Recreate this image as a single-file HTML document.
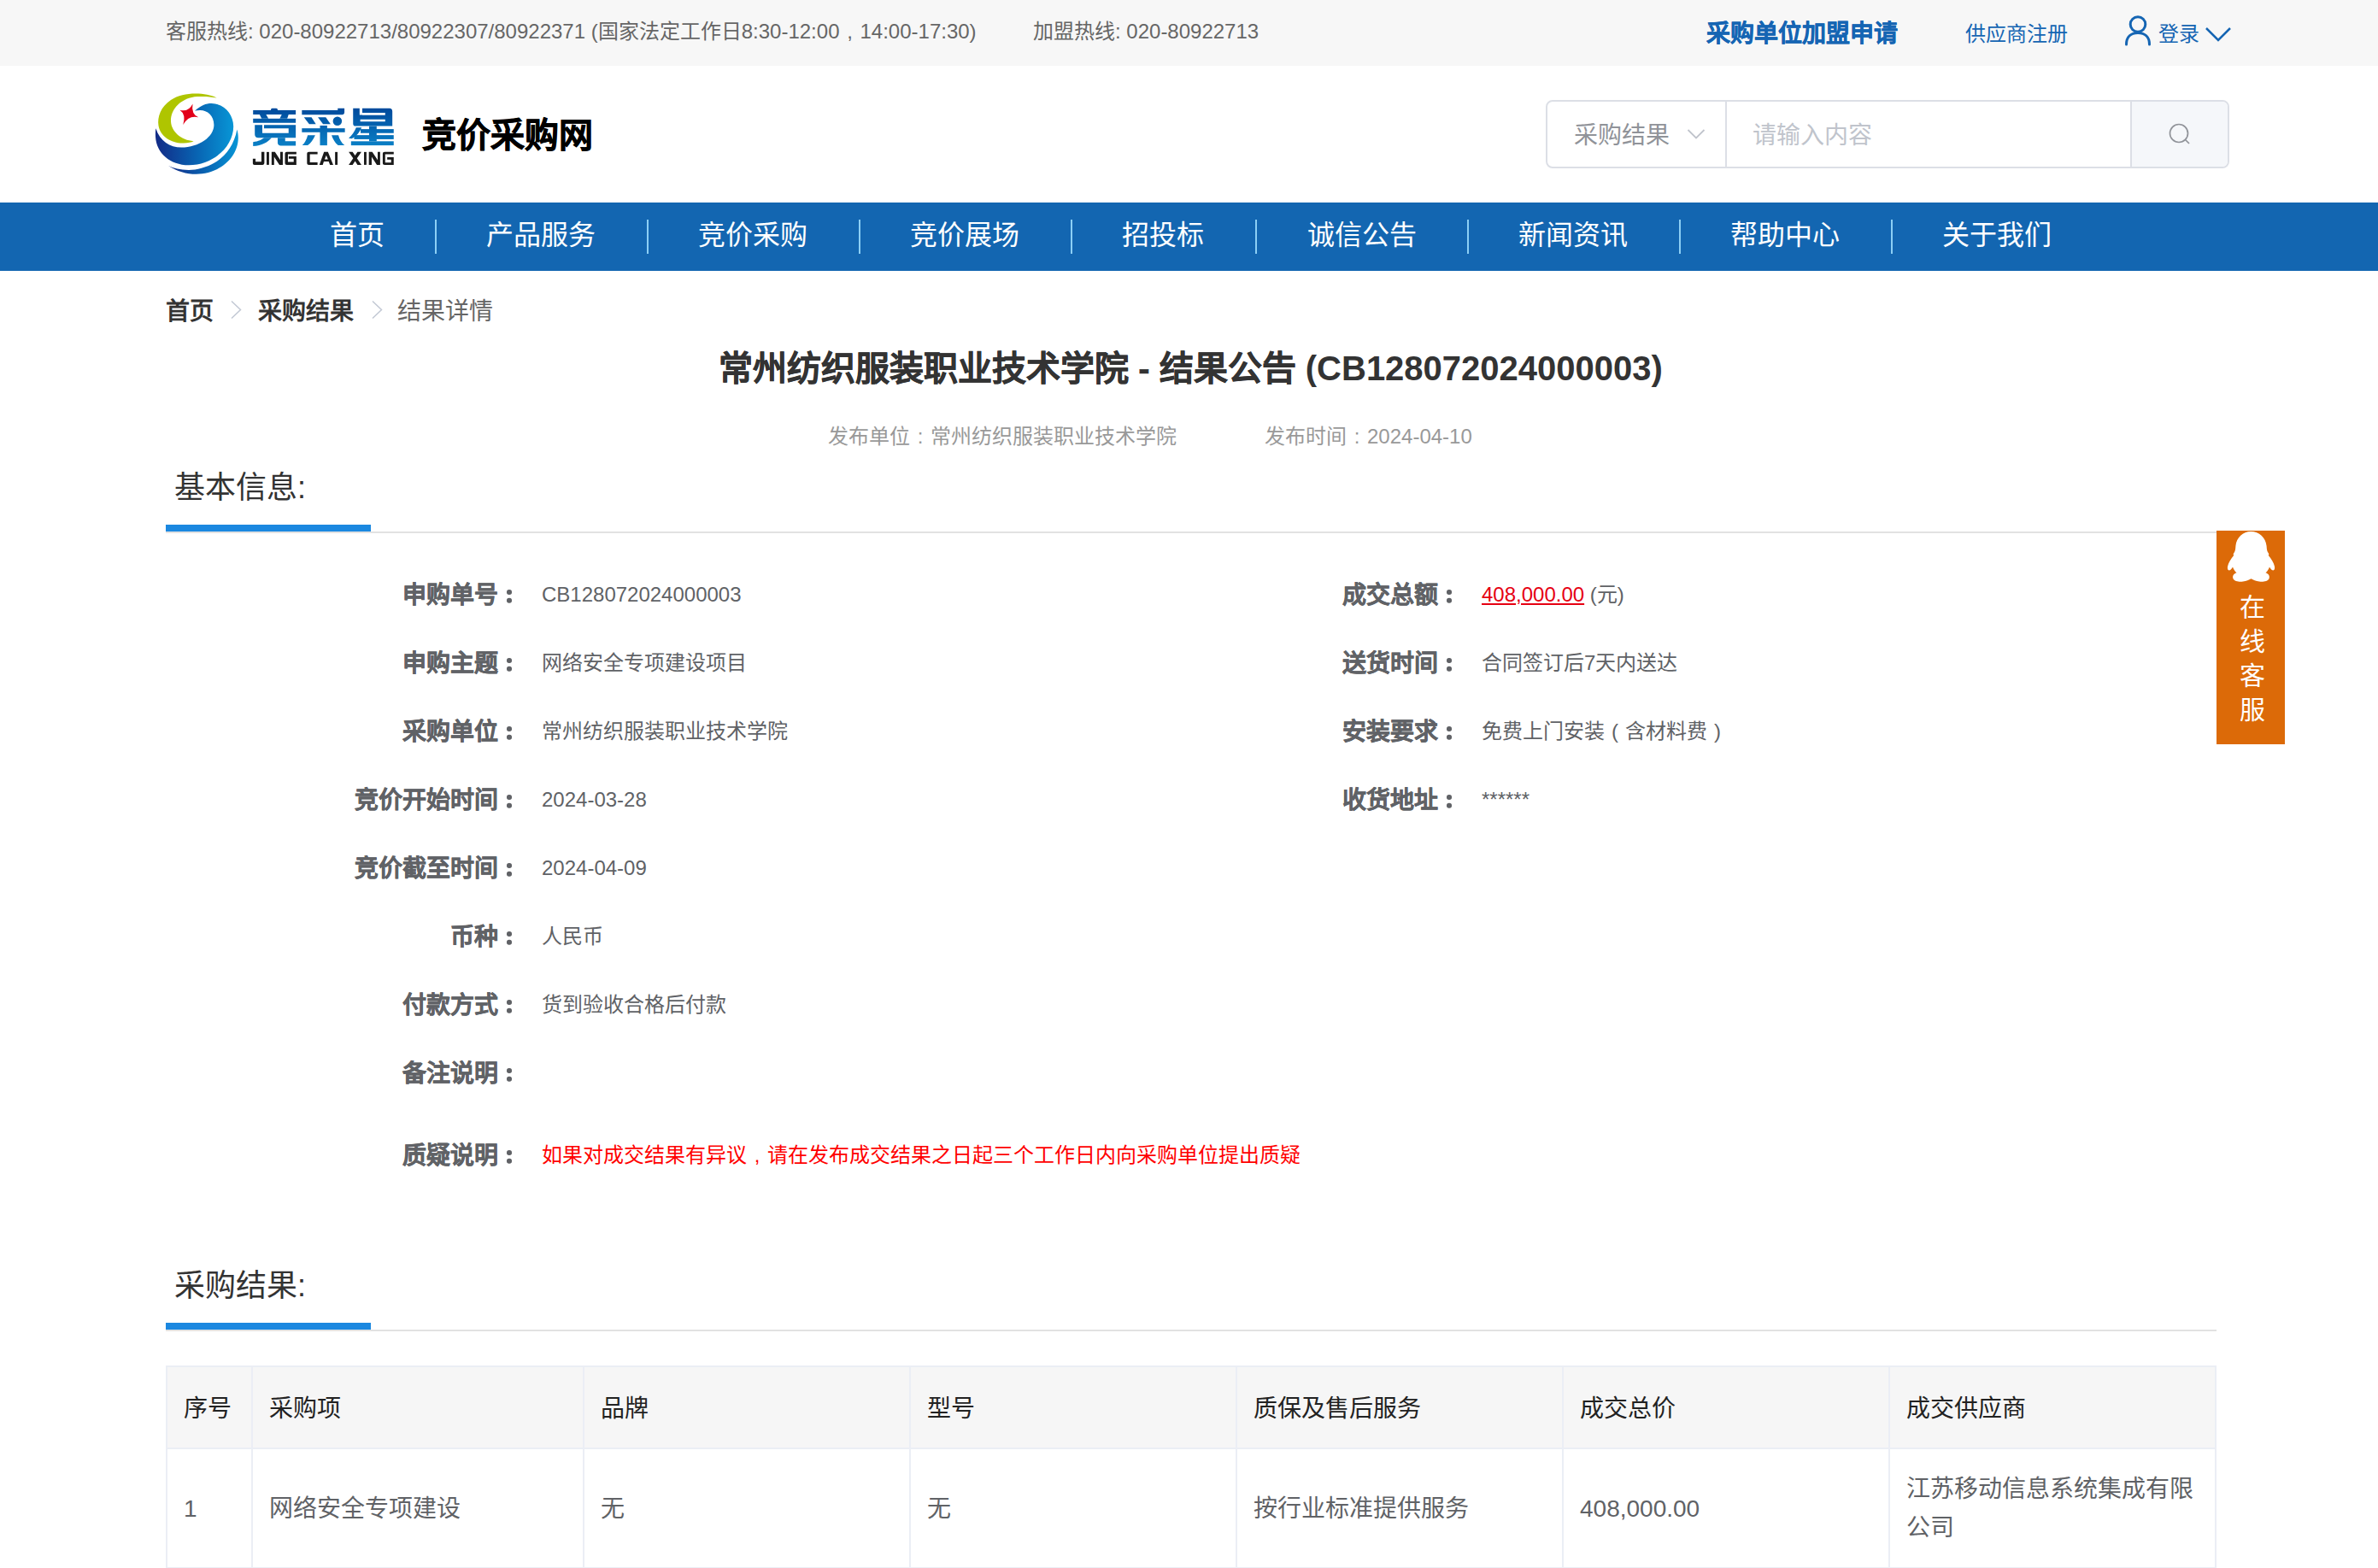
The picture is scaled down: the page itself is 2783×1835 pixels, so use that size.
<!DOCTYPE html>
<html lang="zh-CN">
<head>
<meta charset="utf-8">
<title>结果详情</title>
<style>
*{margin:0;padding:0;box-sizing:border-box;}
html,body{width:2783px;height:1835px;overflow:hidden;background:#fff;}
body{font-family:"Liberation Sans",sans-serif;position:relative;color:#333;}
.abs{position:absolute;white-space:nowrap;}
#topbar{position:absolute;left:0;top:0;width:2783px;height:77px;background:#f7f7f7;}
.tb{font-size:24px;color:#666;line-height:40px;top:17px;}
#nav{position:absolute;left:0;top:237px;width:2783px;height:80px;background:#1366b1;}
.ni{position:absolute;top:-2px;height:80px;line-height:80px;font-size:32px;color:#fff;}
.sep{position:absolute;top:20px;width:2px;height:40px;background:#8ccff5;}
.crumb{font-size:28px;line-height:40px;top:345px;}
.lbl{position:absolute;font-size:28px;font-weight:bold;color:#606266;text-align:right;white-space:nowrap;line-height:40px;margin-top:1px;-webkit-text-stroke:0.4px #606266;}
.cl{position:absolute;width:5.6px;height:5.6px;border-radius:50%;background:#606266;box-shadow:0 9.8px 0 #606266;}
.p{display:inline-block;width:24px;text-align:center;}
.val{position:absolute;font-size:24px;color:#606266;white-space:nowrap;line-height:40px;}
.sechd{font-size:36px;color:#333;line-height:50px;}
table{position:absolute;border-collapse:collapse;table-layout:fixed;}
td,th{border:2px solid #ebeef5;text-align:left;font-weight:normal;font-size:28px;vertical-align:middle;padding:0 19px;}
th{background:#f6f6f6;color:#222;height:96px;padding-bottom:3px;}
td{color:#606266;height:140px;line-height:45px;}
</style>
</head>
<body>
<div id="topbar">
  <div class="abs tb" style="left:194px;">客服热线: 020-80922713/80922307/80922371 (国家法定工作日8:30-12:00<span class="p">,</span>14:00-17:30)</div>
  <div class="abs tb" style="left:1209px;">加盟热线: 020-80922713</div>
  <div class="abs" style="left:1997px;top:20px;font-size:28px;line-height:40px;font-weight:bold;color:#1565b3;-webkit-text-stroke:0.4px #1565b3;">采购单位加盟申请</div>
  <div class="abs" style="left:2300px;top:20px;font-size:24px;line-height:40px;color:#1565b3;">供应商注册</div>
  <svg class="abs" style="left:2484px;top:17px;" width="36" height="38" viewBox="0 0 36 38"><circle cx="18" cy="11.5" r="8.8" fill="none" stroke="#1565b3" stroke-width="3"/><path d="M4.5 35 C4.5 26 10 21.5 18 21.5 C26 21.5 31.5 26 31.5 35" fill="none" stroke="#1565b3" stroke-width="3" stroke-linecap="round"/></svg>
  <div class="abs" style="left:2526px;top:20px;font-size:24px;line-height:40px;color:#1565b3;">登录</div>
  <svg class="abs" style="left:2580px;top:30px;" width="32" height="20" viewBox="0 0 32 20"><path d="M2 3 L16 17 L30 3" fill="none" stroke="#1565b3" stroke-width="2.5"/></svg>
</div>

<!-- logo -->
<svg class="abs" style="left:175px;top:100px;" width="110" height="110" viewBox="0 0 110 110">
  <defs>
    <linearGradient id="g1" x1="0" y1="0" x2="1" y2="0"><stop offset="0" stop-color="#122a86"/><stop offset="0.55" stop-color="#0866b4"/><stop offset="1" stop-color="#0896d6"/></linearGradient>
  </defs>
  <path d="M78.6 14.4 C65 8 40 7 25 17 C13 25 9 37 10.5 47 C12.5 60 26 68 40 67.5 C45 67.3 49 66.5 51.6 65.2 C37 64 25.5 54 25 42 C24.5 27 38 14 56 13 C65 12.6 72 13.2 78.6 14.4 Z" fill="#afc500"/>
  <path d="M53 29.8 C60 23.5 66 21 72.5 21 C88 21.5 98.2 34 98.2 48 C98.2 72 74 93.2 46 93.3 C24 93.3 8 79 7 60 C6.8 56 7 52 7.4 50.2 C12 65 24 72.6 37.2 72.6 C58 72.6 75.4 60 75.4 46.3 C75.4 35 67 28.5 58.2 29.1 C56 29.3 54.5 29.5 53 29.8 Z" fill="url(#g1)"/>
  <path d="M22.1 94 C32 100.5 43 103.8 54.7 103.8 C82 103.8 104 84 103.8 61 C103.8 57 103 54 102.4 51.6 C99 70 89 83 76 90.5 C66 96.2 55 99 45.6 98.9 C36 98.8 28 96.8 22.1 94 Z" fill="url(#g1)"/>
  <path d="M50.5 21.4 Q48.5 33.5 57.2 37.2 Q45.5 34.5 39.3 46 Q43 34 35.4 28.8 Q45.5 31.5 50.5 21.4 Z" fill="#e2001a"/>
</svg>
<svg class="abs" style="left:285px;top:115px;" width="190" height="85" viewBox="0 0 2378 1064">
  <defs>
    <linearGradient id="g2" gradientUnits="userSpaceOnUse" x1="0" y1="148" x2="0" y2="700"><stop offset="0" stop-color="#004a9c"/><stop offset="1" stop-color="#0a80c6"/></linearGradient>
  </defs>
  <g fill="url(#g2)" fill-rule="evenodd">
    <!-- 竞 -->
    <rect x="400" y="148" width="100" height="40" rx="20"/>
    <rect x="140" y="175" width="625" height="63"/>
    <path d="M235 238 L330 238 L365 298 L265 298 Z"/>
    <path d="M560 238 L660 238 L640 298 L530 298 Z"/>
    <rect x="140" y="298" width="625" height="62"/>
    <path d="M165 390 L275 390 L275 440 L300 440 L300 390 L765 390 L765 578 L215 578 C185 578 165 558 165 528 Z M275 440 L660 440 L660 510 L275 510 Z"/>
    <path d="M300 578 L410 578 C360 640 270 695 140 700 L140 640 C220 630 270 605 300 578 Z"/>
    <path d="M500 578 L610 578 L610 630 L765 630 L765 695 L545 695 C520 695 500 675 500 650 Z"/>
    <!-- 采 -->
    <path d="M855 175 L1380 175 L1380 148 L1478 148 L1478 205 C1478 225 1465 240 1445 240 L855 240 Z"/>
    <path d="M885 278 L995 278 L1060 378 L962 378 Z"/>
    <path d="M1090 278 L1205 278 L1275 378 L1165 378 Z"/>
    <circle cx="1375" cy="336" r="66"/>
    <rect x="855" y="440" width="630" height="58"/>
    <rect x="1120" y="400" width="105" height="290"/>
    <path d="M940 540 L1050 540 C1020 610 985 655 940 690 L860 690 C900 650 925 600 940 540 Z"/>
    <path d="M1290 540 L1390 540 C1405 600 1435 650 1480 690 L1385 690 C1340 650 1310 600 1290 540 Z"/>
    <!-- 星 -->
    <path d="M1605 148 L1700 148 L1700 245 L1740 245 L1740 148 L2140 148 C2165 148 2180 165 2180 190 L2180 408 L1640 408 C1620 408 1605 395 1605 375 Z M1740 212 L2075 212 L2075 248 L1740 248 Z M1710 310 L2075 310 L2075 340 L1710 340 Z"/>
    <path d="M1650 428 L1730 428 C1700 500 1650 560 1585 590 L1540 585 C1590 540 1625 490 1650 428 Z"/>
    <rect x="1715" y="452" width="485" height="58"/>
    <rect x="1620" y="540" width="580" height="60"/>
    <rect x="1575" y="630" width="625" height="60"/>
    <rect x="1840" y="408" width="110" height="222"/>
  </g>
  <g fill="#1a1a1a">
    <path d="M262 787 L305 787 L305 945 C305 962 295 975 278 975 L160 975 C145 975 136 965 136 950 L136 887 L176 887 L176 930 L262 930 Z"/>
    <rect x="338" y="787" width="36" height="188"/>
    <path d="M411 787 L460 787 L538 905 L538 787 L575 787 L575 975 L526 975 L448 857 L448 975 L411 975 Z"/>
    <path d="M635 787 L774 787 L774 820 L650 820 L650 932 L735 932 L735 886 L662 886 L662 850 L774 850 L774 975 L635 975 C618 975 607 964 607 947 L607 815 C607 798 618 787 635 787 Z"/>
    <path d="M958 787 L1084 787 L1084 820 L972 820 L972 940 L1084 940 L1084 975 L958 975 C941 975 930 964 930 947 L930 815 C930 798 941 787 958 787 Z"/>
    <path d="M1179 787 L1237 787 L1314 975 L1267 975 L1248 927 L1176 927 L1160 975 L1111 975 Z M1188 894 L1237 894 L1212 837 Z"/>
    <rect x="1341" y="787" width="36" height="188"/>
    <path d="M1541 787 L1597 787 L1634 838 L1670 787 L1727 787 L1662 880 L1727 975 L1670 975 L1634 920 L1597 975 L1541 975 L1606 880 Z"/>
    <rect x="1765" y="787" width="36" height="188"/>
    <path d="M1836 787 L1885 787 L1965 905 L1965 787 L2001 787 L2001 975 L1953 975 L1877 857 L1877 975 L1836 975 Z"/>
    <path d="M2067 787 L2200 787 L2200 820 L2075 820 L2075 942 L2162 942 L2162 898 L2105 898 L2105 864 L2200 864 L2200 975 L2067 975 C2050 975 2039 964 2039 947 L2039 815 C2039 798 2050 787 2067 787 Z"/>
  </g>
</svg>
<div class="abs" style="left:494px;top:133px;font-size:40px;line-height:50px;font-weight:bold;color:#000;-webkit-text-stroke:0.7px #000;">竞价采购网</div>

<!-- search -->
<div class="abs" style="left:1809px;top:117px;width:800px;height:80px;border:2px solid #dcdfe6;border-radius:8px;background:#fff;">
  <div class="abs" style="left:31px;top:2px;font-size:28px;line-height:75px;color:#909399;">采购结果</div>
  <svg class="abs" style="left:163px;top:31px;" width="22" height="14" viewBox="0 0 22 14"><path d="M1.5 2 L11 11.5 L20.5 2" fill="none" stroke="#c0c4cc" stroke-width="1.8"/></svg>
  <div class="abs" style="left:208px;top:0;width:2px;height:76px;background:#dcdfe6;"></div>
  <div class="abs" style="left:240px;top:2px;font-size:28px;line-height:75px;color:#c0c4cc;">请输入内容</div>
  <div class="abs" style="left:682px;top:0;width:114px;height:76px;background:#f5f7fa;border-left:2px solid #dcdfe6;border-radius:0 6px 6px 0;">
    <svg class="abs" style="left:42px;top:24px;" width="30" height="28" viewBox="0 0 30 28"><circle cx="13" cy="13" r="10.5" fill="none" stroke="#909399" stroke-width="1.7"/><path d="M20.5 20.5 L25 25" stroke="#909399" stroke-width="1.7"/></svg>
  </div>
</div>

<div id="nav">
  <div class="ni" style="left:386px;">首页</div>
  <div class="sep" style="left:509px;"></div>
  <div class="ni" style="left:569px;">产品服务</div>
  <div class="sep" style="left:757px;"></div>
  <div class="ni" style="left:817px;">竞价采购</div>
  <div class="sep" style="left:1005px;"></div>
  <div class="ni" style="left:1065px;">竞价展场</div>
  <div class="sep" style="left:1253px;"></div>
  <div class="ni" style="left:1313px;">招投标</div>
  <div class="sep" style="left:1469px;"></div>
  <div class="ni" style="left:1530px;">诚信公告</div>
  <div class="sep" style="left:1717px;"></div>
  <div class="ni" style="left:1777px;">新闻资讯</div>
  <div class="sep" style="left:1965px;"></div>
  <div class="ni" style="left:2025px;">帮助中心</div>
  <div class="sep" style="left:2213px;"></div>
  <div class="ni" style="left:2273px;">关于我们</div>
</div>

<!-- breadcrumb -->
<div class="abs crumb" style="left:194px;font-weight:bold;color:#333;">首页</div>
<svg class="abs" style="left:269px;top:351px;" width="14" height="24" viewBox="0 0 14 24"><path d="M2 1.5 L12.5 11.5 L2 21.5" fill="none" stroke="#c2c8d4" stroke-width="1.5"/></svg>
<div class="abs crumb" style="left:302px;font-weight:bold;color:#333;">采购结果</div>
<svg class="abs" style="left:434px;top:351px;" width="14" height="24" viewBox="0 0 14 24"><path d="M2 1.5 L12.5 11.5 L2 21.5" fill="none" stroke="#c2c8d4" stroke-width="1.5"/></svg>
<div class="abs crumb" style="left:465px;color:#666;">结果详情</div>

<!-- title -->
<div class="abs" style="left:2px;width:2783px;top:405px;text-align:center;font-size:40px;line-height:52px;font-weight:bold;color:#333;-webkit-text-stroke:0.5px #333;">常州纺织服装职业技术学院 - 结果公告 <span style="-webkit-text-stroke:0;">(CB128072024000003)</span></div>
<div class="abs" style="left:969px;top:491px;font-size:24px;line-height:40px;color:#999;">发布单位<span class="p">:</span>常州纺织服装职业技术学院</div>
<div class="abs" style="left:1480px;top:491px;font-size:24px;line-height:40px;color:#999;">发布时间<span class="p">:</span>2024-04-10</div>

<!-- section 1 -->
<div class="abs sechd" style="left:204px;top:546px;">基本信息:</div>
<div class="abs" style="left:194px;top:622px;width:2400px;height:2px;background:#e2e2e2;"></div>
<div class="abs" style="left:194px;top:614px;width:240px;height:8px;background:#1b88e0;"></div>

<div class="lbl" style="right:2200px;top:676px;">申购单号</div><i class="cl" style="left:593px;top:690px;"></i>
<div class="val" style="left:634px;top:676px;">CB128072024000003</div>
<div class="lbl" style="right:2200px;top:756px;">申购主题</div><i class="cl" style="left:593px;top:770px;"></i>
<div class="val" style="left:634px;top:756px;">网络安全专项建设项目</div>
<div class="lbl" style="right:2200px;top:836px;">采购单位</div><i class="cl" style="left:593px;top:850px;"></i>
<div class="val" style="left:634px;top:836px;">常州纺织服装职业技术学院</div>
<div class="lbl" style="right:2200px;top:916px;">竞价开始时间</div><i class="cl" style="left:593px;top:930px;"></i>
<div class="val" style="left:634px;top:916px;">2024-03-28</div>
<div class="lbl" style="right:2200px;top:996px;">竞价截至时间</div><i class="cl" style="left:593px;top:1010px;"></i>
<div class="val" style="left:634px;top:996px;">2024-04-09</div>
<div class="lbl" style="right:2200px;top:1076px;">币种</div><i class="cl" style="left:593px;top:1090px;"></i>
<div class="val" style="left:634px;top:1076px;">人民币</div>
<div class="lbl" style="right:2200px;top:1156px;">付款方式</div><i class="cl" style="left:593px;top:1170px;"></i>
<div class="val" style="left:634px;top:1156px;">货到验收合格后付款</div>
<div class="lbl" style="right:2200px;top:1236px;">备注说明</div><i class="cl" style="left:593px;top:1250px;"></i>
<div class="lbl" style="right:2200px;top:1332px;">质疑说明</div><i class="cl" style="left:593px;top:1346px;"></i>
<div class="val" style="left:634px;top:1332px;color:#f00;">如果对成交结果有异议<span class="p">,</span>请在发布成交结果之日起三个工作日内向采购单位提出质疑</div>

<div class="lbl" style="right:1100px;top:676px;">成交总额</div><i class="cl" style="left:1693px;top:690px;"></i>
<div class="val" style="left:1734px;top:676px;"><span style="color:#e60012;text-decoration:underline;">408,000.00</span> (元)</div>
<div class="lbl" style="right:1100px;top:756px;">送货时间</div><i class="cl" style="left:1693px;top:770px;"></i>
<div class="val" style="left:1734px;top:756px;">合同签订后7天内送达</div>
<div class="lbl" style="right:1100px;top:836px;">安装要求</div><i class="cl" style="left:1693px;top:850px;"></i>
<div class="val" style="left:1734px;top:836px;">免费上门安装<span class="p">(</span>含材料费<span class="p">)</span></div>
<div class="lbl" style="right:1100px;top:916px;">收货地址</div><i class="cl" style="left:1693px;top:930px;"></i>
<div class="val" style="left:1734px;top:916px;">******</div>

<!-- side service -->
<div class="abs" style="left:2594px;top:621px;width:80px;height:250px;background:#dc6a08;">
  <svg class="abs" style="left:0;top:0;" width="80" height="70" viewBox="0 0 80 70"><path d="M40.2 1.1 C50 1.1 57.5 8 58.6 18 C58.8 21 59 24 60.2 25.5 C61.5 27 61.5 28 60.8 29 C64 33 67 37 68 42 C68.5 45 67.5 47 65.5 46.2 C64 45.5 63 44 62 42.4 C61 45 59.5 47.5 57.5 49.3 C61 50.5 62.5 53 61.6 56 C60 59.5 54 60.3 50 59.6 C46 59 43 57.5 40.5 56.2 C38 57.5 35 59 31 59.6 C27 60.3 21 59.5 19.4 56 C18.5 53 20 50.5 23.5 49.3 C21.5 47.5 20 45 19 42.4 C18 44 17 45.5 15.5 46.2 C13.5 47 12.5 45 13 42 C14 37 17 33 20.2 29 C19.5 28 19.5 27 20.8 25.5 C22 24 22.2 21 22.4 18 C23.5 8 31 1.1 40.2 1.1 Z" fill="#fff"/></svg>
  <div class="abs" style="left:27px;top:70px;font-size:30px;line-height:40px;color:#fff;white-space:normal;width:32px;">在线客服</div>
</div>

<!-- section 2 -->
<div class="abs sechd" style="left:204px;top:1480px;">采购结果:</div>
<div class="abs" style="left:194px;top:1556px;width:2400px;height:2px;background:#e2e2e2;"></div>
<div class="abs" style="left:194px;top:1548px;width:240px;height:8px;background:#1b88e0;"></div>

<table style="left:194px;top:1598px;width:2398px;">
  <colgroup><col style="width:100px"><col style="width:388px"><col style="width:382px"><col style="width:382px"><col style="width:382px"><col style="width:382px"><col style="width:382px"></colgroup>
  <tr><th>序号</th><th>采购项</th><th>品牌</th><th>型号</th><th>质保及售后服务</th><th>成交总价</th><th>成交供应商</th></tr>
  <tr><td>1</td><td>网络安全专项建设</td><td>无</td><td>无</td><td>按行业标准提供服务</td><td>408,000.00</td><td>江苏移动信息系统集成有限公司</td></tr>
</table>
</body>
</html>
